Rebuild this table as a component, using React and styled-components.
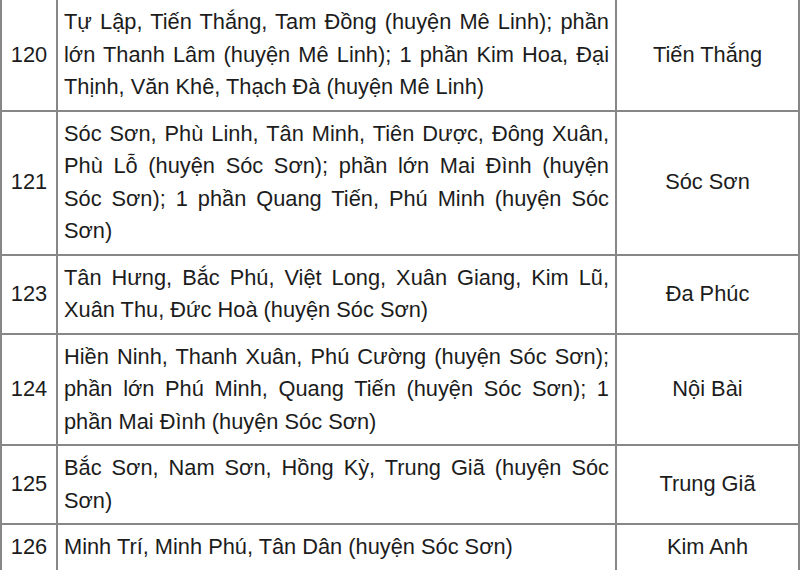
import styled, { createGlobalStyle } from 'styled-components';

const GlobalStyle = createGlobalStyle`
	html, body {
		margin: 0;
		padding: 0;
		background: #ffffff;
	}
	body {
		font-family: "Liberation Sans", Arial, sans-serif;
		overflow: hidden;
	}
`;

const Wrapper = styled.div`
	width: 800px;
	height: 570px;
	overflow: hidden;
	background: #ffffff;
`;

const Table = styled.table`
	width: 800px;
	margin-top: -2px;
	border-collapse: collapse;
	table-layout: fixed;
	color: #1c1c1c;
	font-size: 21.8px;
	line-height: 32.5px;
`;

const Cell = styled.td`
	border: 2px solid #878787;
	padding: 6px 6px;
	vertical-align: middle;
	text-align: ${(p) => (p.wide ? 'left' : 'center')};
`;

// one printed line of the description; all but the last are spread to full width
const Line = styled.span`
	display: block;
	text-align: justify;
	text-align-last: ${(p) => (p.last ? 'left' : 'justify')};
`;

const rows = [
	{
		id: 120,
		lines: [
			'Tự Lập, Tiến Thắng, Tam Đồng (huyện Mê Linh); phần',
			'lớn Thanh Lâm (huyện Mê Linh); 1 phần Kim Hoa, Đại',
			'Thịnh, Văn Khê, Thạch Đà (huyện Mê Linh)',
		],
		name: 'Tiến Thắng',
	},
	{
		id: 121,
		lines: [
			'Sóc Sơn, Phù Linh, Tân Minh, Tiên Dược, Đông Xuân,',
			'Phù Lỗ (huyện Sóc Sơn); phần lớn Mai Đình (huyện',
			'Sóc Sơn); 1 phần Quang Tiến, Phú Minh (huyện Sóc',
			'Sơn)',
		],
		name: 'Sóc Sơn',
	},
	{
		id: 123,
		lines: [
			'Tân Hưng, Bắc Phú, Việt Long, Xuân Giang, Kim Lũ,',
			'Xuân Thu, Đức Hoà (huyện Sóc Sơn)',
		],
		name: 'Đa Phúc',
	},
	{
		id: 124,
		lines: [
			'Hiền Ninh, Thanh Xuân, Phú Cường (huyện Sóc Sơn);',
			'phần lớn Phú Minh, Quang Tiến (huyện Sóc Sơn); 1',
			'phần Mai Đình (huyện Sóc Sơn)',
		],
		name: 'Nội Bài',
	},
	{
		id: 125,
		lines: ['Bắc Sơn, Nam Sơn, Hồng Kỳ, Trung Giã (huyện Sóc', 'Sơn)'],
		name: 'Trung Giã',
	},
	{
		id: 126,
		lines: ['Minh Trí, Minh Phú, Tân Dân (huyện Sóc Sơn)'],
		name: 'Kim Anh',
	},
];

const App = () => (
	<Wrapper>
		<GlobalStyle />
		<Table>
			<colgroup>
				<col style={{ width: 56 }} />
				<col style={{ width: 559 }} />
				<col />
			</colgroup>
			<tbody>
				{rows.map((row) => (
					<tr key={row.id}>
						<Cell>{row.id}</Cell>
						<Cell wide>
							{row.lines.map((line, i) => (
								<Line key={i} last={i === row.lines.length - 1}>
									{line}
								</Line>
							))}
						</Cell>
						<Cell>{row.name}</Cell>
					</tr>
				))}
			</tbody>
		</Table>
	</Wrapper>
);

export default App;
